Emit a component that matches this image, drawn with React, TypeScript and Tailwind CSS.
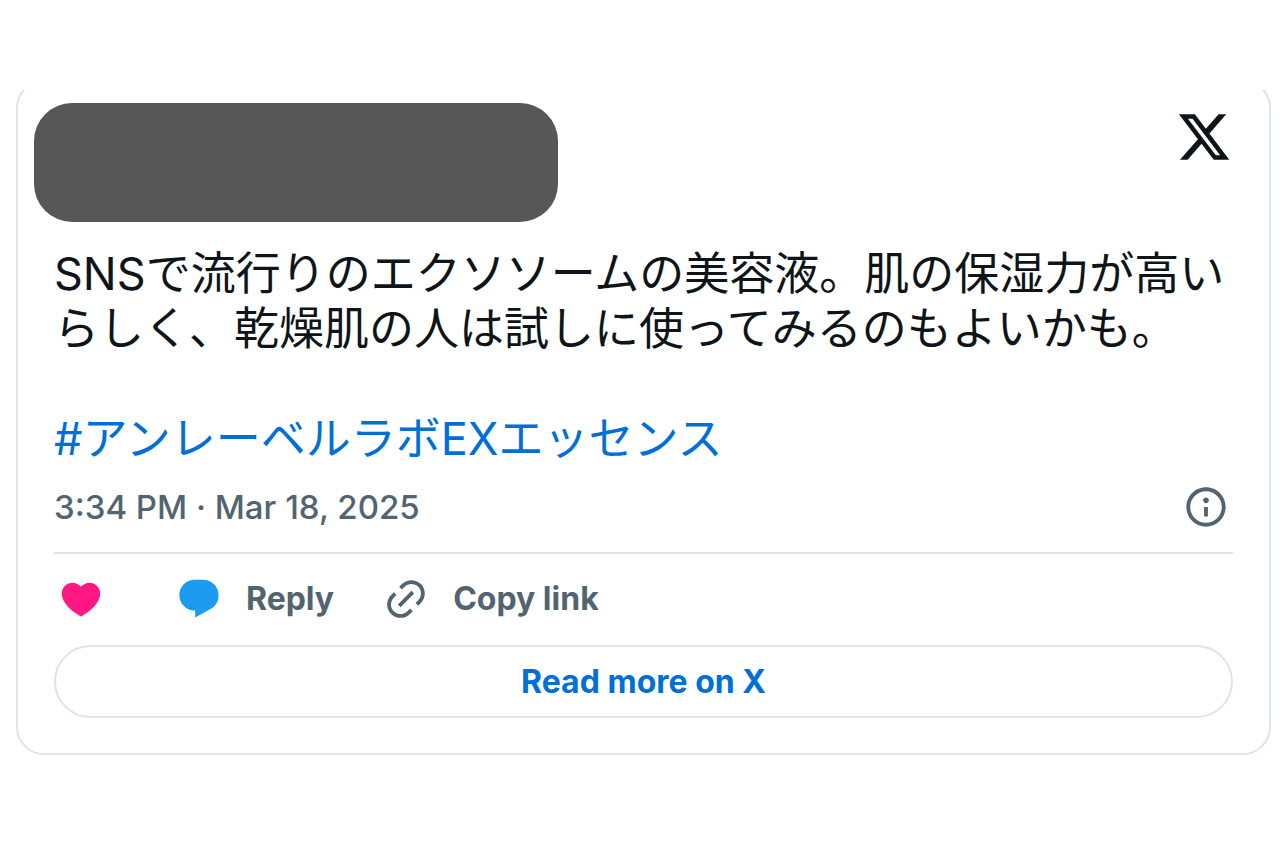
import type { ReactNode } from "react";

const paths = {
  x: "M18.244 2.25h3.308l-7.227 8.26 8.502 11.24H16.17l-5.214-6.817L4.99 21.75H1.68l7.73-8.835L1.254 2.25H8.08l4.713 6.231zm-1.161 17.52h1.833L7.084 4.126H5.117z",
  info: "M13.5 8.5c0 .83-.67 1.5-1.5 1.5s-1.5-.67-1.5-1.5S11.17 7 12 7s1.5.67 1.5 1.5zM13 17v-5h-2v5h2zm-1 5.25c5.66 0 10.25-4.59 10.25-10.25S17.66 1.75 12 1.75 1.75 6.34 1.75 12 6.34 22.25 12 22.25zM20.25 12c0 4.56-3.69 8.25-8.25 8.25S3.75 16.56 3.75 12 7.44 3.75 12 3.75s8.25 3.69 8.25 8.25z",
  heart:
    "M20.884 13.19c-1.351 2.48-4.001 5.12-8.379 7.67l-.503.3-.504-.3c-4.379-2.55-7.029-5.19-8.382-7.67-1.36-2.5-1.41-4.86-.514-6.67.887-1.79 2.647-2.91 4.601-3.01 1.651-.09 3.368.56 4.798 2.01 1.429-1.45 3.146-2.1 4.796-2.01 1.954.1 3.714 1.22 4.601 3.01.896 1.81.846 4.17-.514 6.67z",
  reply:
    "M1.751 10c0-4.42 3.584-8 8.005-8h4.366c4.49 0 8.129 3.64 8.129 8.13 0 2.96-1.607 5.68-4.196 7.11l-8.054 4.46v-3.69h-.067c-4.49.1-8.183-3.51-8.183-8.01z",
  link: "M18.36 5.64c-1.95-1.96-5.11-1.96-7.07 0L9.88 7.05 8.46 5.64l1.42-1.42c2.73-2.73 7.16-2.73 9.9 0 2.73 2.74 2.73 7.17 0 9.9l-1.42 1.42-1.41-1.42 1.41-1.41c1.96-1.96 1.96-5.12 0-7.07zm-2.12 3.53l-7.07 7.07-1.41-1.41 7.07-7.07 1.41 1.41zm-12.02.71l1.42-1.42 1.41 1.42-1.41 1.41c-1.96 1.96-1.96 5.12 0 7.07 1.95 1.96 5.11 1.96 7.07 0l1.41-1.41 1.42 1.41-1.42 1.42c-2.73 2.73-7.16 2.73-9.9 0-2.73-2.74-2.73-7.17 0-9.9z",
};

function Icon({ name, className }: { name: keyof typeof paths; className: string }) {
  return (
    <svg viewBox="0 0 24 24" fill="currentColor" aria-hidden="true" className={className}>
      <path d={paths[name]} />
    </svg>
  );
}

function Action({ icon, children }: { icon: ReactNode; children: ReactNode }) {
  return (
    <button type="button" className="flex items-center gap-6 text-[32px] leading-[48px] font-bold">
      {icon}
      {children}
    </button>
  );
}

export default function App() {
  return (
    <main className="min-h-screen bg-white pt-[90px] pr-[9px] pl-4 font-['Inter','Noto_Sans_CJK_JP',sans-serif] text-[#536471]">
      <div className="overflow-hidden">
        <article className="-mt-[10px] rounded-[28px] border-2 border-[#dde5e9] px-9 pt-[21px] pb-[35px]">
          <header className="-ml-5 flex items-start justify-between pr-px">
            <div className="h-[119px] w-[524px] rounded-[38px] bg-[#575757]" />
            <a href="#x" aria-label="X" className="mt-[6px] text-[#0f1419]">
              <Icon name="x" className="size-14" />
            </a>
          </header>

          <p className="mt-6 text-[45px] leading-[55px] whitespace-pre-wrap text-[#0f1419]">
            {"SNSで流行りのエクソソームの美容液。肌の保湿力が高い\nらしく、乾燥肌の人は試しに使ってみるのもよいかも。\n\n"}
            <a href="#tag" className="text-[#006fd6]">
              #アンレーベルラボEXエッセンス
            </a>
          </p>

          <div className="mt-[15px] flex items-center justify-between pr-1">
            <time dateTime="2025-03-18T15:34" className="text-[33px] leading-[52px] font-medium">
              3:34 PM · Mar 18, 2025
            </time>
            <button type="button" aria-label="Information" className="block">
              <Icon name="info" className="size-[46px]" />
            </button>
          </div>

          <hr className="mt-[19px] border-t-2 border-[#dde5e9]" />

          <div className="mt-[21px] flex items-center pl-1">
            <button type="button" aria-label="Like" className="mr-[72px] block">
              <Icon name="heart" className="size-[46px] text-[#ff1783]" />
            </button>
            <div className="flex gap-[49px]">
              <Action icon={<Icon name="reply" className="size-[46px] text-[#1d9bf0]" />}>Reply</Action>
              <Action icon={<Icon name="link" className="size-[46px]" />}>Copy link</Action>
            </div>
          </div>

          <a
            href="#more"
            className="mt-[22px] flex h-[73px] items-center justify-center rounded-full border-2 border-[#dde5e9] text-[32px] font-bold text-[#006fd6]"
          >
            Read more on X
          </a>
        </article>
      </div>
    </main>
  );
}
